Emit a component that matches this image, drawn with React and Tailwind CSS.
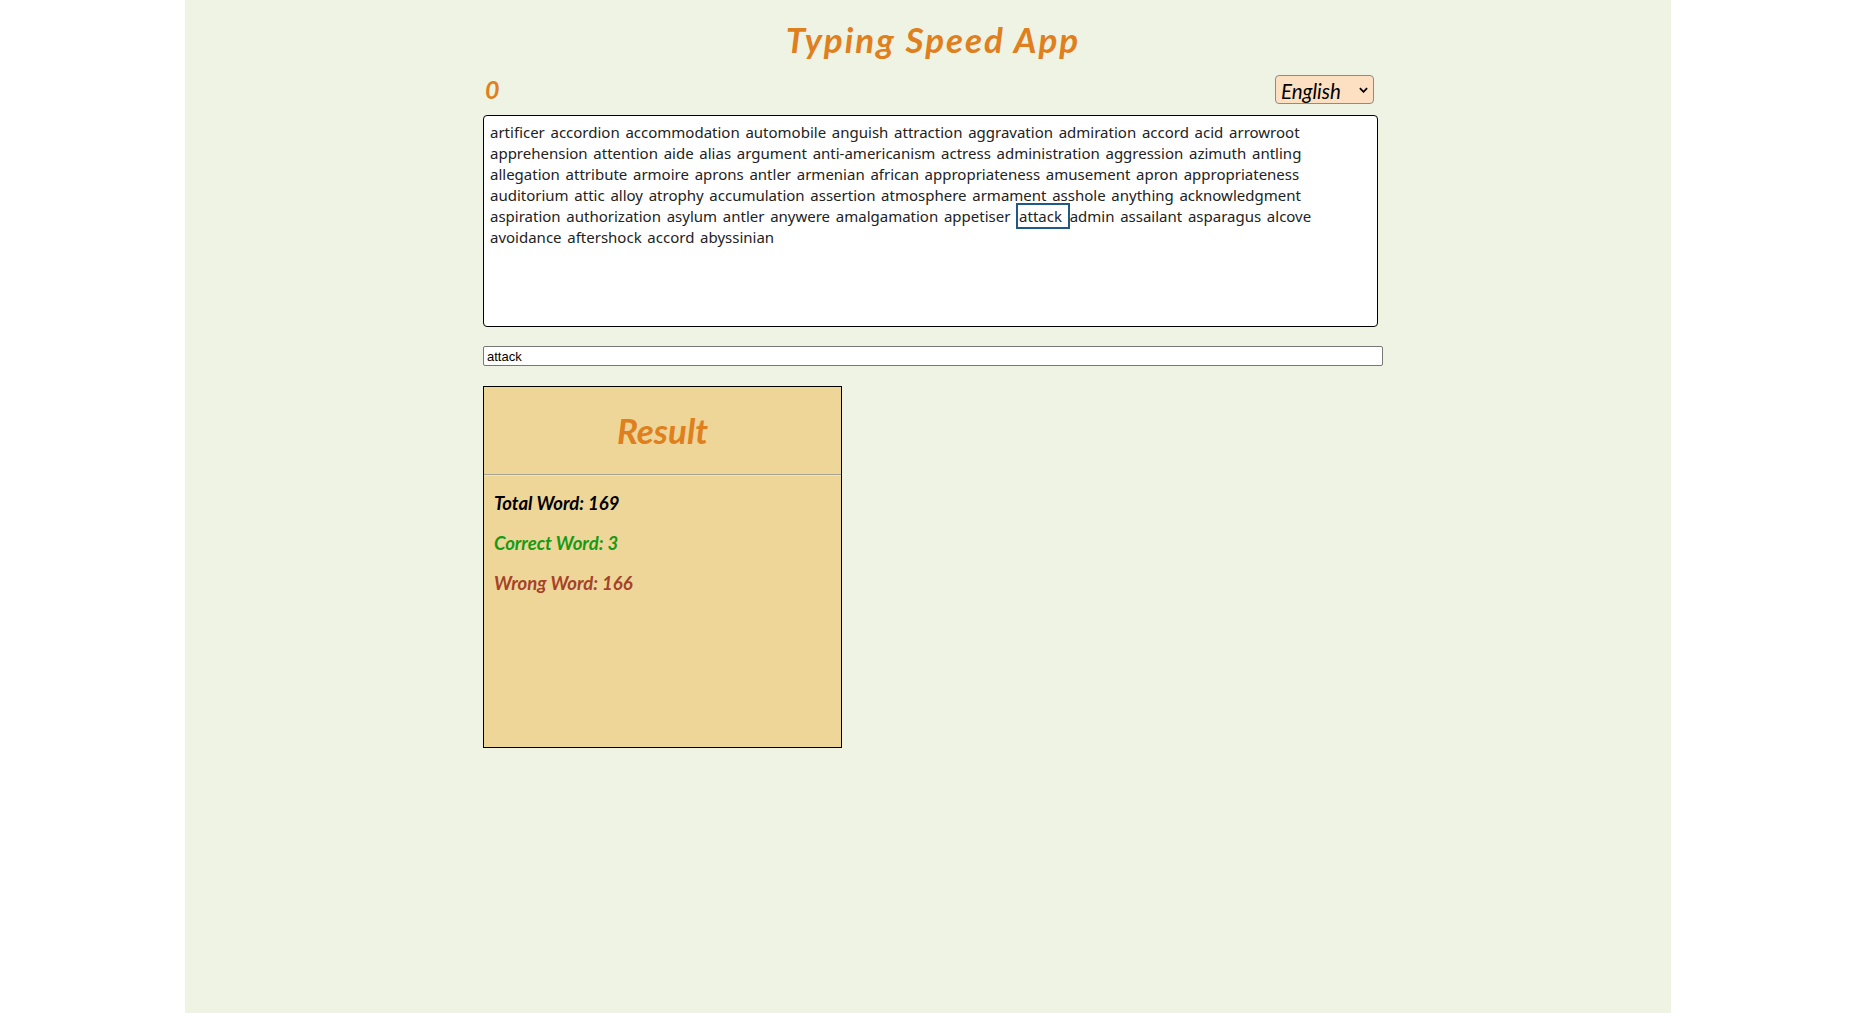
import { useState } from "react";

const LINES = [
  "artificer accordion accommodation automobile anguish attraction aggravation admiration accord acid arrowroot",
  "apprehension attention aide alias argument anti-americanism actress administration aggression azimuth antling",
  "allegation attribute armoire aprons antler armenian african appropriateness amusement apron appropriateness",
  "auditorium attic alloy atrophy accumulation assertion atmosphere armament asshole anything acknowledgment",
  "aspiration authorization asylum antler anywere amalgamation appetiser attack admin assailant asparagus alcove",
  "avoidance aftershock accord abyssinian",
];

// index of the word currently being typed (line 4, word 7)
const ACTIVE = { line: 4, word: 7 };

function Word({ text, active }) {
  return (
    <span
      className={
        active
          ? "border-2 border-[#1d5a84] pl-[1px] py-[1px]"
          : ""
      }
    >
      {text}{" "}
    </span>
  );
}

export default function App() {
  const [typed, setTyped] = useState("attack");

  return (
    <div className="min-h-screen bg-white flex justify-center">
      <div className="w-[1486px] min-h-[1013px] bg-[#eff3e3]">
        <div className="ml-[298px] w-[900px] flex flex-col">
          {/* Title */}
          <h1 className="pt-[19px] text-center text-[35px] leading-[40px] font-bold italic text-[#df7f1d] font-['Lato',sans-serif] tracking-[2px]">
            Typing Speed App
          </h1>

          {/* Timer + language */}
          <div className="mt-[16px] flex items-center justify-between pr-[9px] h-[30px]">
            <span className="pl-[2px] text-[25px] font-bold italic text-[#df7f1d] font-['Lato',sans-serif]">
              0
            </span>
            <div className="relative">
              <select
                defaultValue="English"
                className="appearance-none w-[99px] h-[29px] rounded-[4px] border border-[#8c8c8c] bg-[#fde0c2] pl-[5px] text-[20.5px] italic text-black font-['Lato',sans-serif] outline-none"
              >
                <option>English</option>
                <option>Korean</option>
              </select>
              <svg
                viewBox="0 0 10 6"
                className="pointer-events-none absolute right-[6px] top-[12px] w-[9px] h-[6px]"
              >
                <path d="M1 1l4 4 4-4" fill="none" stroke="black" strokeWidth="2" />
              </svg>
            </div>
          </div>

          {/* Word board */}
          <div className="mt-[10px] w-[895px] h-[212px] rounded-[4px] border border-black bg-white pl-[6px] pt-[6px] text-[15px] leading-[21px] [word-spacing:1.8px] text-[#222] font-['Noto_Sans',sans-serif]">
            {LINES.map((line, li) => (
              <div key={li} className="whitespace-nowrap">
                {line.split(" ").map((w, wi) => (
                  <Word
                    key={wi}
                    text={w}
                    active={li === ACTIVE.line && wi === ACTIVE.word}
                  />
                ))}
              </div>
            ))}
          </div>

          {/* Input */}
          <input
            value={typed}
            onChange={(e) => setTyped(e.target.value)}
            className="mt-[19px] w-[900px] h-[20px] rounded-[2px] border border-[#777] bg-white px-[3px] text-[13px] text-black font-['Liberation_Sans',sans-serif] outline-none"
          />

          {/* Result card */}
          <div className="mt-[20px] w-[359px] h-[362px] border border-black bg-[#eed699] flex flex-col">
            <h2 className="h-[87px] flex items-center justify-center text-[35px] font-bold italic text-[#df7f1d] font-['Lato',sans-serif]">
              Result
            </h2>
            <div className="h-[2px] border-t border-[#a9a48f] border-b border-b-[#f3e3b6]" />
            <div className="px-[10px] pt-[16px] flex flex-col gap-[17px] text-[18.5px] leading-[23px] font-bold italic font-['Lato',sans-serif]">
              <p className="text-black">Total Word: 169</p>
              <p className="text-[#179a17]">Correct Word: 3</p>
              <p className="text-[#a4422a]">Wrong Word: 166</p>
            </div>
          </div>
        </div>
      </div>
    </div>
  );
}
